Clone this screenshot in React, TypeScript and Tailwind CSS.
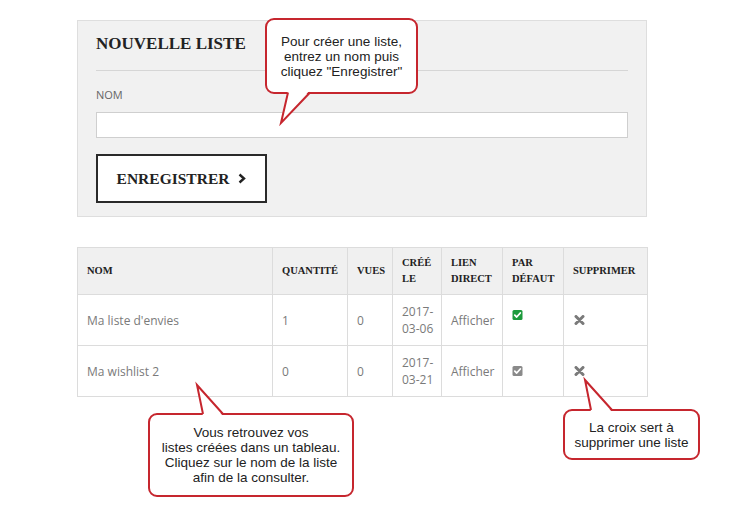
import React from "react";

const serif = "font-['Liberation_Serif',serif]";
const sans = "font-['Open_Sans',sans-serif]";

const rows = [
  { name: "Ma liste d'envies", qty: "1", views: "0", date: "2017-03-06", isDefault: true, lift: true },
  { name: "Ma wishlist 2", qty: "0", views: "0", date: "2017-03-21", isDefault: false, lift: false },
];

function CheckSquare({ on }: { on: boolean }) {
  return (
    <svg width="11" height="10" viewBox="0 0 11 10">
      <rect x="0.5" y="0" width="10" height="10" rx="1.5" fill={on ? "#1c9a3c" : "#8a8a8a"} />
      <path d="M2.8 5.2 L4.7 7 L8.3 3" fill="none" stroke="#fff" strokeWidth="1.8" strokeLinecap="round" strokeLinejoin="round" />
    </svg>
  );
}

function Cross() {
  return (
    <svg width="11" height="10" viewBox="0 0 11 10">
      <path d="M2 1.5 L9 8.5 M9 1.5 L2 8.5" stroke="#7a7a7a" strokeWidth="3" strokeLinecap="round" />
    </svg>
  );
}

function Callout({ box, children }: { box: string; children: React.ReactNode }) {
  return (
    <div
      className={`absolute flex items-center justify-center rounded-[9px] border-2 border-[#c6262e] bg-white text-center text-[13.5px] leading-[15px] text-[#222] font-['Liberation_Sans',Arial,sans-serif] ${box}`}
    >
      <p>{children}</p>
    </div>
  );
}

export default function App() {
  const th = `border border-[#dcdcdc] bg-[#f0f0f0] pl-[9px] pr-[4px] text-left align-middle text-[10.5px] font-bold uppercase leading-[16px] text-[#222] ${serif}`;
  const td = `border border-[#dcdcdc] pl-[9px] pr-[4px] align-middle text-[12px] leading-[17px] text-[#7a7a7a] ${sans}`;

  return (
    <div className="relative h-[522px] w-[732px] overflow-hidden bg-white">
      <div className="ml-[77px] w-[570px] pt-[20px]">
        <section className="border border-[#dedede] bg-[#f1f1f1] px-[18px] pt-[11px] pb-[13px]">
          <h2 className={`border-b border-[#d6d6d6] pb-[14px] text-[17px] font-bold leading-[24px] text-[#222] ${serif}`}>
            NOUVELLE LISTE
          </h2>
          <label className={`mt-[16px] block text-[11px] leading-[16px] text-[#666] ${sans}`}>NOM</label>
          <input className="mt-[9px] block h-[26px] w-[532px] border border-[#cfcfcf] bg-white" />
          <button className={`mt-[16px] flex h-[49px] w-[171px] items-center justify-center gap-[9px] border-2 border-[#2a2a2a] bg-white text-[15.5px] font-bold text-[#222] ${serif}`}>
            <span>ENREGISTRER</span>
            <svg width="8" height="11" viewBox="0 0 8 11">
              <path d="M1.5 1.5 L6 5.5 L1.5 9.5" fill="none" stroke="#222" strokeWidth="2.4" />
            </svg>
          </button>
        </section>

        <table className="mt-[30px] w-[570px] table-fixed border-collapse">
          <colgroup>
            <col className="w-[195px]" />
            <col className="w-[75px]" />
            <col className="w-[45px]" />
            <col className="w-[49px]" />
            <col className="w-[61px]" />
            <col className="w-[61px]" />
            <col className="w-[84px]" />
          </colgroup>
          <thead>
            <tr className="h-[47px]">
              <th className={th}>Nom</th>
              <th className={th}>Quantité</th>
              <th className={th}>Vues</th>
              <th className={th}>Créé le</th>
              <th className={th}>Lien direct</th>
              <th className={th}>Par défaut</th>
              <th className={th}>Supprimer</th>
            </tr>
          </thead>
          <tbody>
            {rows.map((row) => (
              <tr key={row.name} className="h-[51px]">
                <td className={td}>{row.name}</td>
                <td className={td}>{row.qty}</td>
                <td className={td}>{row.views}</td>
                <td className={td}>{row.date}</td>
                <td className={td}>Afficher</td>
                <td className={td}>
                  <div className={row.lift ? "mb-[10px] flex" : "flex"}>
                    <CheckSquare on={row.isDefault} />
                  </div>
                </td>
                <td className={td}>
                  <div className="flex pl-[1px]">
                    <Cross />
                  </div>
                </td>
              </tr>
            ))}
          </tbody>
        </table>
      </div>

      <Callout box="left-[265px] top-[18px] h-[76px] w-[153px]">
        Pour créer une liste,
        <br />
        entrez un nom puis
        <br />
        cliquez "Enregistrer"
      </Callout>
      <Callout box="left-[148px] top-[413px] h-[84px] w-[206px] leading-[14.5px]">
        Vous retrouvez vos
        <br />
        listes créées dans un tableau.
        <br />
        Cliquez sur le nom de la liste
        <br />
        afin de la consulter.
      </Callout>
      <Callout box="left-[563px] top-[409px] h-[51px] w-[137px] leading-[14.5px]">
        La croix sert à
        <br />
        supprimer une liste
      </Callout>

      <svg className="pointer-events-none absolute left-0 top-0" width="732" height="522" viewBox="0 0 732 522">
        <polygon points="288,90 310,90 281,123" fill="#fff" />
        <polyline points="288,92.5 281,123 310,92.5" fill="none" stroke="#c6262e" strokeWidth="2" />
        <polygon points="203,416 223,416 197,385" fill="#fff" />
        <polyline points="203,414 197,385 223,414" fill="none" stroke="#c6262e" strokeWidth="2" />
        <polygon points="591,412 612,412 585,380" fill="#fff" />
        <polyline points="591,410 585,380 612,410" fill="none" stroke="#c6262e" strokeWidth="2" />
      </svg>
    </div>
  );
}
